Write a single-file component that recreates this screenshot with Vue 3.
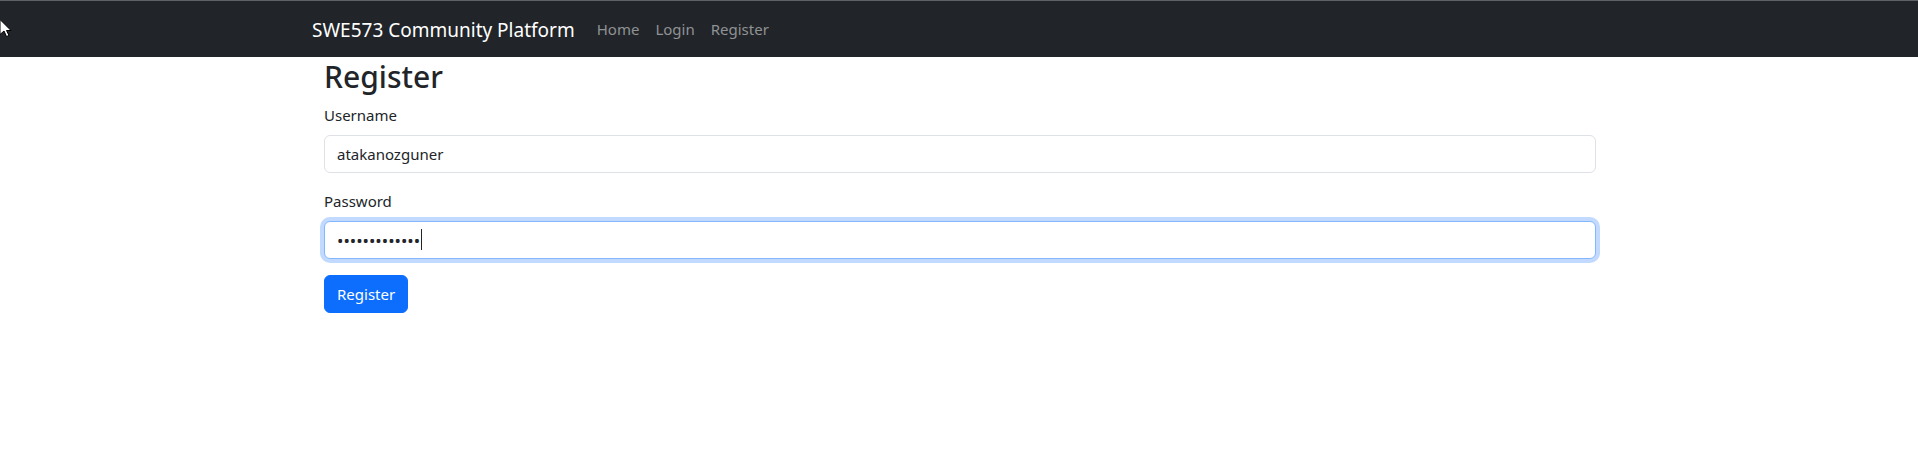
<script setup>
import { ref } from 'vue'

const links = ['Home', 'Login', 'Register']
const username = ref('atakanozguner')
const password = ref('community5730')
</script>

<template>
  <div class="page">
    <header class="navbar">
      <nav class="container">
        <a class="brand" href="#">SWE573 Community Platform</a>
        <ul class="links">
          <li v-for="link in links" :key="link"><a href="#">{{ link }}</a></li>
        </ul>
      </nav>
    </header>

    <main class="container">
      <form class="form" @submit.prevent>
        <h2>Register</h2>
        <div class="field">
          <label for="username">Username</label>
          <input id="username" v-model="username" type="text" />
        </div>
        <div class="field">
          <label for="password">Password</label>
          <div class="control">
            <input id="password" v-model="password" class="active" type="password" />
            <span class="caret"></span>
          </div>
        </div>
        <button type="submit">Register</button>
      </form>
    </main>

    <svg class="pointer" width="12" height="20" viewBox="0 0 12 20" aria-hidden="true">
      <path d="M0 1.5L11 12.5H6.5L9 17.5L6.5 18.5L4 13L0 16.5Z" fill="#fff" stroke="#000" />
    </svg>
  </div>
</template>

<style>
body {
  margin: 0;
  background: #fff;
}
</style>

<style scoped>
.page {
  position: relative;
  font-family: "Noto Sans", "Open Sans", sans-serif;
  font-size: 15px;
  line-height: 24px;
  color: #212529;
}
.page * {
  box-sizing: border-box;
}
.navbar {
  padding: 8px 0 8px 2px;
  border-top: 1px solid #5f6265;
  background: #212529;
}
.container {
  max-width: 1320px;
  margin: 0 auto;
  padding: 0 12px;
}
main.container {
  max-width: 1322px;
  padding-left: 14px;
}
nav.container {
  display: flex;
  align-items: center;
}
.brand {
  margin-right: 14px;
  padding-top: 2px;
  color: #fff;
  font-size: 19px;
  line-height: 30px;
  text-decoration: none;
  white-space: nowrap;
}
.links {
  display: flex;
  margin: 0;
  padding: 0;
  list-style: none;
}
.links a {
  display: block;
  padding: 8px;
  color: #909294;
  text-decoration: none;
}
.form {
  padding: 0 12px;
}
h2 {
  margin: 0 0 6px;
  font-size: 30px;
  font-weight: 500;
  line-height: 40px;
}
.field {
  margin-bottom: 16px;
}
label {
  display: block;
  width: fit-content;
  margin-bottom: 8px;
}
input {
  display: block;
  width: 100%;
  height: 38px;
  padding: 6px 12px;
  border: 1px solid #dee2e6;
  border-radius: 6px;
  outline: 0;
  background: #fff;
  color: #212529;
  font: inherit;
}
.control {
  position: relative;
}
.active,
input:focus {
  border-color: #86b7fe;
  box-shadow: 0 0 0 4px #c2daff;
}
.active {
  font-size: 17px;
}
.caret {
  position: absolute;
  top: 8px;
  left: 97px;
  width: 1px;
  height: 21px;
  background: #212529;
}
button {
  display: block;
  height: 38px;
  padding: 6px 12px;
  border: 1px solid #0d6efd;
  border-radius: 6px;
  background: #0d6efd;
  color: #fff;
  font: inherit;
}
.pointer {
  position: absolute;
  top: 18px;
  left: 0;
}
</style>
